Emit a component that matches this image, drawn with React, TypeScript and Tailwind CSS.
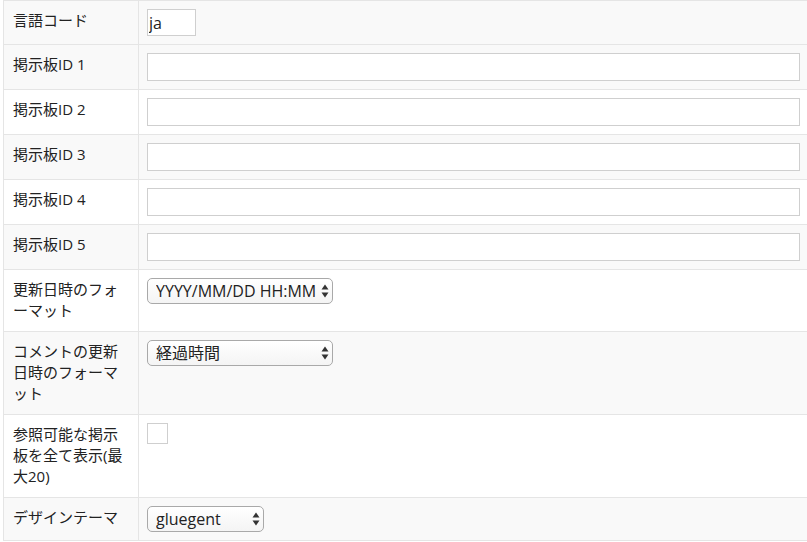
import React from 'react';

interface RowProps {
  label: string;
  shaded?: boolean;
  children: React.ReactNode;
}

const Row = ({ label, shaded = false, children }: RowProps) => {
  return (
    <div className={`flex border-b border-[#e5e5e5] ${shaded ? 'bg-[#f9f9f9]' : 'bg-white'}`}>
      {/* ラベル */}
      <div className="w-[135px] shrink-0 border-r border-[#e5e5e5] pl-[9px] pr-[14px] pt-[9px] pb-[10px] text-[15px] leading-[21px] text-[#222]">
        {label}
      </div>
      {/* 入力欄 */}
      <div className="flex-1 p-2">{children}</div>
    </div>
  );
};

const TextInput = ({ value = '', w = 'w-full', h = 'h-[28px]' }: { value?: string; w?: string; h?: string }) => (
  <input
    type="text"
    defaultValue={value}
    className={`${w} ${h} block border border-[#cfcfcf] bg-white px-[1px] text-[16px] text-[#222] outline-none`}
  />
);

const Select = ({ value, w }: { value: string; w: string }) => (
  <div className={`relative ${w}`}>
    <select
      defaultValue={value}
      className="block h-[26px] w-full appearance-none rounded-[5px] border border-[#a9a9a9] bg-gradient-to-b from-white to-[#f4f4f4] pl-2 pr-[13px] text-[16px] leading-[24px] text-[#222] outline-none"
    >
      <option>{value}</option>
    </select>
    <svg className="pointer-events-none absolute right-[4px] top-[6px]" width="8" height="14" viewBox="0 0 8 14">
      <path d="M4 0.5 L7.5 5.5 L0.5 5.5 Z" fill="#333" />
      <path d="M4 13.5 L7.5 8.5 L0.5 8.5 Z" fill="#333" />
    </svg>
  </div>
);

export default function App() {
  return (
    <div className="w-[807px] h-[542px] overflow-hidden bg-white pl-[3px] font-['Open_Sans','Noto_Sans_CJK_JP',sans-serif]">
      <div className="w-[805px] border-l border-t border-[#e5e5e5]">
        <Row label="言語コード" shaded>
          <TextInput value="ja" w="w-[49px]" h="h-[27px]" />
        </Row>
        <Row label="掲示板ID 1" shaded>
          <TextInput />
        </Row>
        <Row label="掲示板ID 2">
          <TextInput />
        </Row>
        <Row label="掲示板ID 3" shaded>
          <TextInput />
        </Row>
        <Row label="掲示板ID 4">
          <TextInput />
        </Row>
        <Row label="掲示板ID 5" shaded>
          <TextInput />
        </Row>
        <Row label="更新日時のフォーマット">
          <Select value="YYYY/MM/DD HH:MM" w="w-[186px]" />
        </Row>
        <Row label="コメントの更新日時のフォーマット" shaded>
          <Select value="経過時間" w="w-[186px]" />
        </Row>
        <Row label="参照可能な掲示板を全て表示(最大20)">
          <div className="h-[21px] w-[21px] border border-[#cfcfcf] bg-white" />
        </Row>
        <Row label="デザインテーマ" shaded>
          <Select value="gluegent" w="w-[117px]" />
        </Row>
      </div>
    </div>
  );
}
